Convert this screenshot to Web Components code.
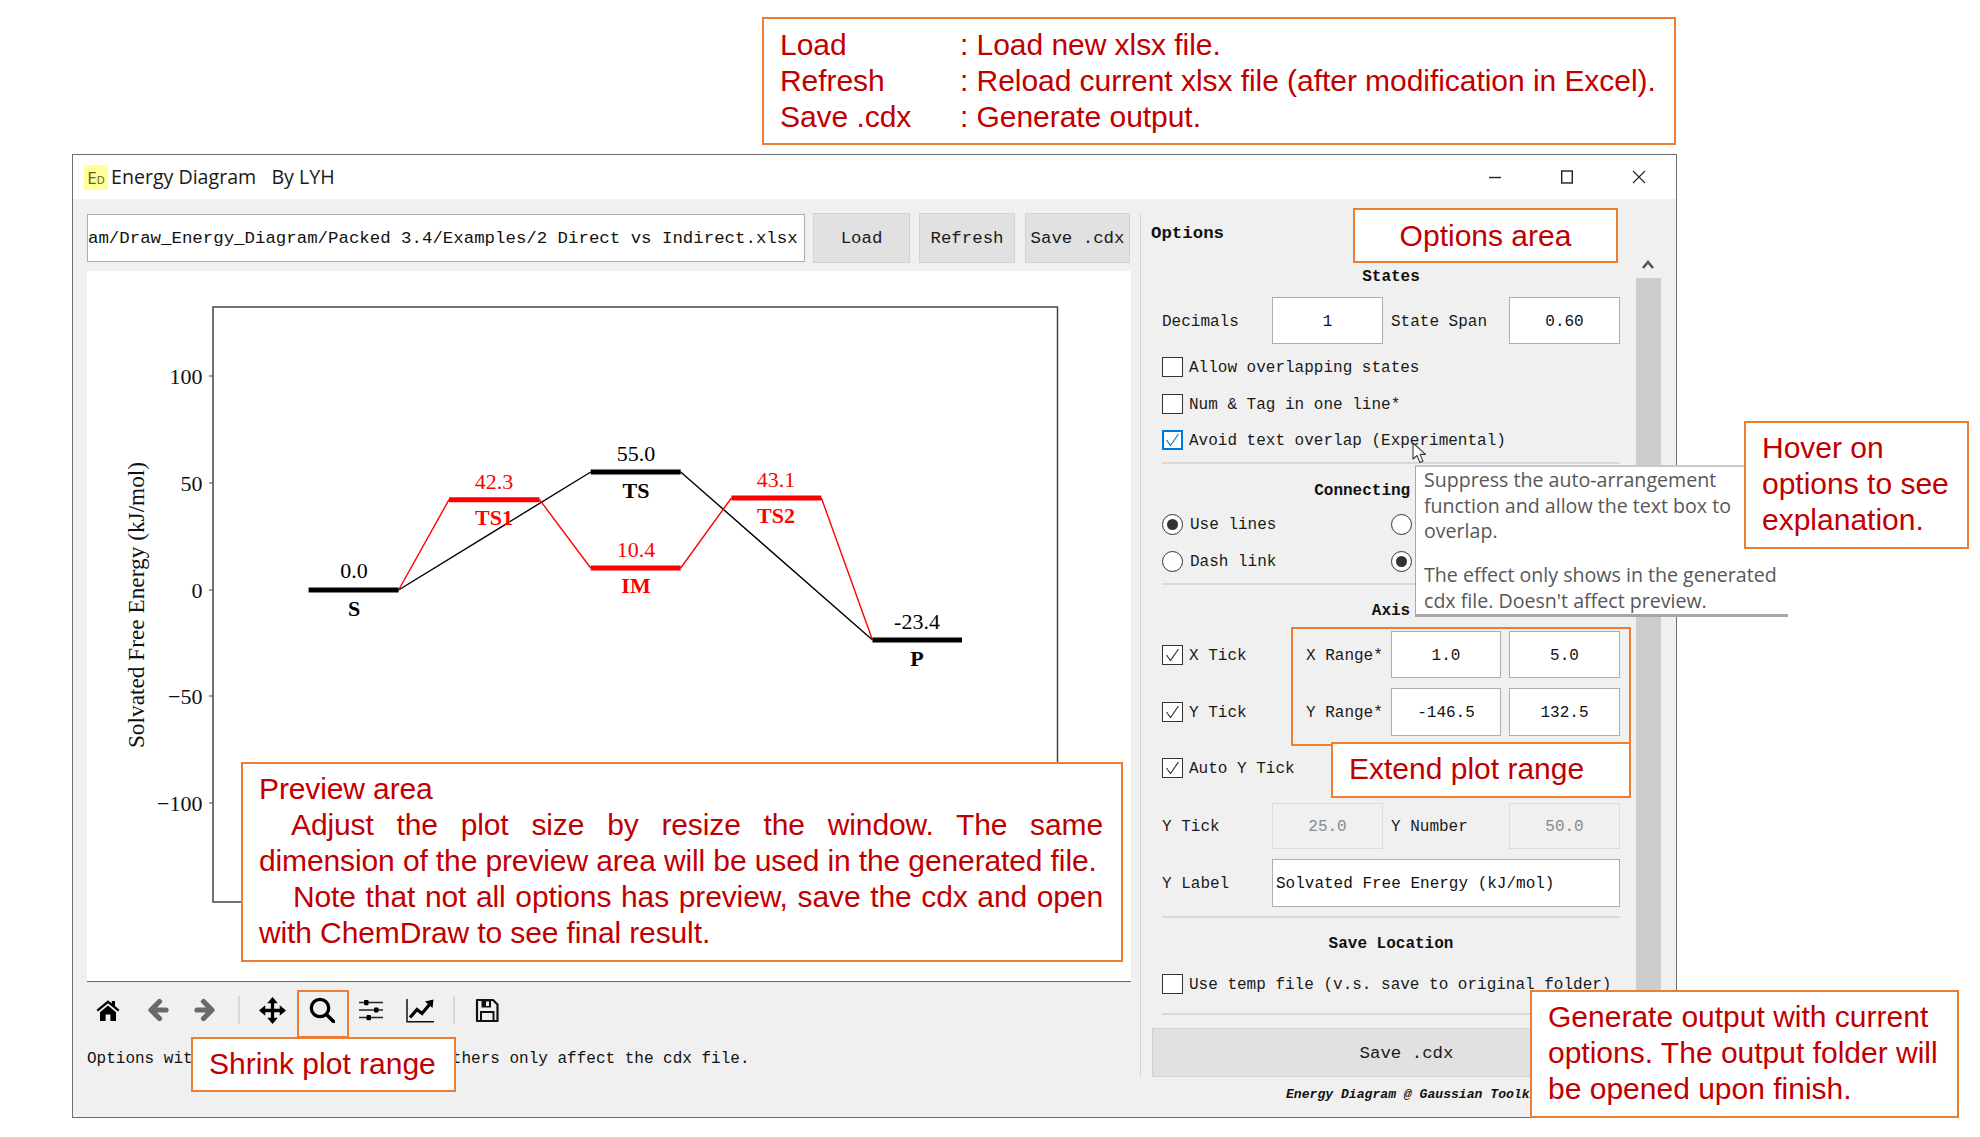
<!DOCTYPE html>
<html lang="en">
<head>
<meta charset="utf-8">
<title>Energy Diagram</title>
<style>
html,body{margin:0;padding:0;background:#fff}
body{position:relative;width:1980px;height:1137px;overflow:hidden;font-family:"Liberation Sans",sans-serif}
</style>
</head>
<body>
<ed-window></ed-window>

<ed-tooltip style="left:1415px;top:465px;width:373px;height:152px"></ed-tooltip>

<ed-note style="left:762px;top:17px;width:914px;height:128px;padding:8px 16px;letter-spacing:-.05px">
  <div style="display:grid;grid-template-columns:180px 1fr;white-space:nowrap">
    <span>Load</span><span>: Load new xlsx file.</span>
    <span>Refresh</span><span>: Reload current xlsx file (after modification in Excel).</span>
    <span>Save .cdx</span><span>: Generate output.</span>
  </div>
</ed-note>
<ed-note style="left:1353px;top:208px;width:265px;height:55px;display:flex;align-items:center;justify-content:center">Options area</ed-note>
<ed-note style="left:1744px;top:421px;width:225px;height:128px;padding:7px 16px">Hover on<br>options to see<br>explanation.</ed-note>
<ed-note style="left:1291px;top:627px;width:340px;height:119px;background:transparent"></ed-note>
<ed-note style="left:1331px;top:742px;width:300px;height:56px;display:flex;align-items:center;padding-left:16px;padding-bottom:2px">Extend plot range</ed-note>
<ed-note style="left:241px;top:762px;width:882px;height:200px;padding:7px 18px 7px 16px;text-align:justify;letter-spacing:-.12px">
  <div>Preview area</div>
  <div style="text-indent:32px">Adjust the plot size by resize the window. The same dimension of the preview area will be used in the generated file.</div>
  <div style="text-indent:34px">Note that not all options has preview, save the cdx and open with ChemDraw to see final result.</div>
</ed-note>
<ed-note style="left:297px;top:990px;width:52px;height:48px;background:transparent"></ed-note>
<ed-note style="left:191px;top:1037px;width:265px;height:55px;display:flex;align-items:center;padding-left:16px;padding-bottom:2px">Shrink plot range</ed-note>
<ed-note style="left:1530px;top:990px;width:429px;height:128px;padding:7px 16px">Generate output with current<br>options. The output folder will<br>be opened upon finish.</ed-note>

<ed-cursor style="left:1412px;top:442px"></ed-cursor>

<script>
function def(name, css, html){
  customElements.define(name, class extends HTMLElement{
    constructor(){
      super();
      const root=this.attachShadow({mode:"open"});
      const t=document.createElement("template");
      t.innerHTML="<style>"+css+"</style>"+html;
      root.appendChild(t.content.cloneNode(true));
    }
  });
}
const MONO='"Liberation Mono","DejaVu Sans Mono",monospace';

def("ed-note",
  ':host{position:absolute;box-sizing:border-box;background:#fff;border:2px solid #ed7d31;color:#c00000;font:30px/36px "Liberation Sans",Arial,sans-serif;pointer-events:none}',
  '<slot></slot>');

def("ed-cursor",
  ':host{position:absolute;display:block;width:16px;height:22px;line-height:0}',
  '<svg width="16" height="22" viewBox="0 0 16 22"><path d="M1 1V17L5 13.5 8 20.5 11 19.2 8 12.4H13.5Z" fill="#fff" stroke="#3a3a3a" stroke-width="1.1" stroke-linejoin="round"/></svg>');

def("ed-tooltip",
  ':host{position:absolute;box-sizing:border-box;background:#fff;border-top:2px solid #c9c9c9;border-left:1px solid #a8a8a8;border-bottom:3px solid #a6a6a6;color:#575757;font:19.6px/25.5px "Open Sans",sans-serif;padding:0 8px;white-space:nowrap}'
  +'p{margin:0}p+p{margin-top:18.5px}',
  '<p>Suppress the auto-arrangement<br>function and allow the text box to<br>overlap.</p><p>The effect only shows in the generated<br>cdx file. Doesn\'t affect preview.</p>');

def("ed-button",
  ':host{display:flex;align-items:center;justify-content:center;box-sizing:border-box;height:50px;padding-top:1px;background:#e1e1e1;border:1.5px solid #d2d2d2;color:#1a1a1a;font:17.4px '+MONO+';white-space:pre}',
  '<slot></slot>');

def("ed-field",
  ':host{display:flex;align-items:center;justify-content:center;box-sizing:border-box;padding-top:2px;background:#fff;border:1.5px solid #adadad;color:#111;font:16px '+MONO+';white-space:pre;overflow:hidden}'
  +':host([disabled]){background:#f0f0f0;border-color:#dcdcdc;color:#8a8a8a}'
  +':host([left]){justify-content:flex-start;padding-left:3px}',
  '<slot></slot>');

def("ed-check",
  ':host{display:flex;align-items:center;gap:6px;font:16px '+MONO+';color:#1a1a1a;white-space:pre}'
  +'.b{box-sizing:border-box;width:21px;height:20px;flex:none;background:#fff;border:1.5px solid #333;display:flex;align-items:center;justify-content:center}'
  +'.l{padding-top:2px}'
  +'svg{display:none}:host([checked]) svg{display:block}'
  +':host([accent]) .b{border-color:#0078d7;border-width:2px}:host([accent]) path{stroke:#0078d7}',
  '<span class="b"><svg width="15" height="14" viewBox="0 0 15 14"><path d="M1.5 7 L5.5 12.5 L13.5 1" fill="none" stroke="#333" stroke-width="1.2"/></svg></span><span class="l"><slot></slot></span>');

def("ed-radio",
  ':host{display:flex;align-items:center;gap:7px;font:16px '+MONO+';color:#1a1a1a;white-space:pre}'
  +'.r{box-sizing:border-box;width:21px;height:21px;flex:none;border-radius:50%;background:#fff;border:1.5px solid #333;display:flex;align-items:center;justify-content:center}'
  +'.l{padding-top:2px}'
  +'i{display:none;width:11px;height:11px;border-radius:50%;background:#333}:host([checked]) i{display:block}',
  '<span class="r"><i></i></span><span class="l"><slot></slot></span>');

def("ed-divider",
  ':host{display:block;height:2px;background:#d8d8d8}','');

def("ed-titlebar",
  ':host{display:flex;align-items:center;height:44px;background:#fff;box-sizing:border-box;padding-left:11px}'
  +'.ic{display:flex;align-items:baseline;justify-content:center;width:24px;height:25px;background:#ffff99;color:#66661a;font:17px/25px "Noto Sans",sans-serif;margin-right:3px;overflow:hidden}'
  +'.ic small{font-size:11px;line-height:25px}'
  +'.t{font:19.6px "Open Sans",sans-serif;color:#1a1a1a;white-space:pre;padding-bottom:2px}'
  +'.c{margin-left:auto;display:flex;padding-right:1px}'
  +'.c span{width:71.5px;height:44px;display:flex;align-items:center;justify-content:center;box-sizing:border-box}'
  +'.c span.a{padding-right:3px}.c span.b{padding-right:1.5px}',
  '<span class="ic">E<small>D</small></span><span class="t">Energy Diagram   By LYH</span>'
  +'<div class="c">'
  +'<span class="a"><svg width="14" height="14" viewBox="0 0 14 14"><path d="M1 7.500H13" stroke="#222" stroke-width="1.400"/></svg></span>'
  +'<span class="b"><svg width="14" height="14" viewBox="0 0 14 14"><rect x="1.700" y="1" width="10.600" height="12" fill="none" stroke="#222" stroke-width="1.400"/></svg></span>'
  +'<span><svg width="14" height="14" viewBox="0 0 14 14"><path d="M1 1L13 13M13 1L1 13" stroke="#222" stroke-width="1.100"/></svg></span>'
  +'</div>');

def("ed-plot",
  ':host{display:block;height:710px;background:#fff;border-bottom:1.5px solid #666;line-height:0}'
  +'svg{display:block}text{font-family:"Liberation Serif","Times New Roman",serif;font-size:22px}'
  +'.b{font-weight:bold;font-size:22px}.yl{font-size:23.300px}',
  '<svg width="1044" height="710" viewBox="87 271 1044 710">'
  +'<rect x="213" y="307" width="844.500" height="595" fill="none" stroke="#444" stroke-width="1.500"/>'
  +'<g stroke="#444" stroke-width="1.200"><path d="M209 376H213M209 483H213M209 590H213M209 696H213M209 803H213"/></g>'
  +'<g text-anchor="end" fill="#111"><text x="202.500" y="384">100</text><text x="202.500" y="491">50</text><text x="202.500" y="597.500">0</text><text x="202.500" y="704">−50</text><text x="202.500" y="811">−100</text></g>'
  +'<text class="yl" transform="translate(144 605) rotate(-90)" text-anchor="middle" fill="#111">Solvated Free Energy (kJ/mol)</text>'
  +'<g fill="none" stroke-width="1.400">'
  +'<path d="M398.600 590L590.700 472M680.700 472L872.500 640" stroke="#000"/>'
  +'<path d="M398.600 590L449 499.700M539.600 499.700L590.700 568M680.700 568L731.400 498M821.400 498L872.500 640" stroke="#f00"/>'
  +'</g>'
  +'<g stroke-width="5">'
  +'<path d="M308.600 590H398.600M590.700 472H680.700M872.500 640H962" stroke="#000"/>'
  +'<path d="M449 499.700H539.600M590.700 568H680.700M731.400 498H821.400" stroke="#f00"/>'
  +'</g>'
  +'<g text-anchor="middle" fill="#000">'
  +'<text x="354" y="578">0.0</text><text x="354" y="616" class="b">S</text>'
  +'<text x="636" y="461">55.0</text><text x="636" y="498" class="b">TS</text>'
  +'<text x="917" y="629">-23.4</text><text x="917" y="666" class="b">P</text>'
  +'</g>'
  +'<g text-anchor="middle" fill="#f00">'
  +'<text x="494" y="489">42.3</text><text x="494" y="525" class="b">TS1</text>'
  +'<text x="636" y="557">10.4</text><text x="636" y="593" class="b">IM</text>'
  +'<text x="776" y="487">43.1</text><text x="776" y="523" class="b">TS2</text>'
  +'</g>'
  +'</svg>');

def("ed-toolbar",
  ':host{display:flex;align-items:center;height:55px;padding-left:9px;padding-top:1px;box-sizing:border-box}'
  +'svg{display:block;flex:none}.sep{width:2px;height:28px;background:#d8d8d8;flex:none}',
  /* home */
  '<svg width="24" height="24" viewBox="0 0 24 24"><path d="M12 2.200L.6 11.800l1.400 1.700L12 5.200l10 8.300 1.400-1.700-4.400-3.700V3h-3.200v2.400z" fill="#000"/><path d="M4 14.200L12 7.400l8 6.800V23h-5.600v-6.400H9.600V23H4z" fill="#000"/></svg>'
  /* back */
  +'<svg style="margin-left:27px" width="22" height="24" viewBox="0 0 22 24"><path d="M19 12H5M12.500 3.500L4 12l8.500 8.500" fill="none" stroke="#6a6a6a" stroke-width="5.200" stroke-linejoin="round" stroke-linecap="round"/></svg>'
  /* forward */
  +'<svg style="margin-left:25px" width="22" height="24" viewBox="0 0 22 24"><path d="M3 12H17M9.500 3.500L18 12l-8.500 8.500" fill="none" stroke="#6a6a6a" stroke-width="5.200" stroke-linejoin="round" stroke-linecap="round"/></svg>'
  +'<span class="sep" style="margin-left:22px"></span>'
  /* move */
  +'<svg style="margin-left:19px" width="27" height="27" viewBox="0 0 28 28"><path d="M14 4V24M4 14H24" stroke="#000" stroke-width="3.400"/><path d="M14 0l5.500 6.500h-11zM14 28l5.500-6.500h-11zM0 14l6.500-5.500v11zM28 14l-6.500-5.500v11z" fill="#000"/></svg>'
  /* zoom */
  +'<svg style="margin-left:23px" width="26" height="26" viewBox="0 0 26 26"><circle cx="11" cy="11" r="8.700" fill="none" stroke="#000" stroke-width="3.300"/><path d="M17.500 17.500L24.500 24.500" stroke="#000" stroke-width="3.600" stroke-linecap="round"/></svg>'
  /* configure */
  +'<svg style="margin-left:24px" width="24" height="24" viewBox="0 0 24 24"><path d="M0 4.500H24M0 12H24M0 19.500H24" stroke="#222" stroke-width="1.600"/><rect x="5" y="2" width="4.500" height="5.200" rx="1" fill="#000"/><rect x="15" y="9.400" width="4.500" height="5.200" rx="1" fill="#000"/><rect x="7.500" y="17" width="4.500" height="5.200" rx="1" fill="#000"/></svg>'
  /* chart */
  +'<svg style="margin-left:23px" width="28" height="25" viewBox="0 0 28 25"><path d="M1 1V23.700H28" fill="none" stroke="#111" stroke-width="1.500"/><path d="M4 19.500L11 11.500 16 15.500 23.500 6.500" fill="none" stroke="#000" stroke-width="3.200"/><path d="M19 3.500L27.500 1.500 26.500 10z" fill="#000"/></svg>'
  +'<span class="sep" style="margin-left:19px"></span>'
  /* save */
  +'<svg style="margin-left:20px" width="24" height="25" viewBox="0 0 24 25"><path d="M2 2H18L22.500 6.500V23H2z" fill="none" stroke="#111" stroke-width="2.200" stroke-linejoin="round"/><path d="M6.500 2H16V9.500H6.500z" fill="#111"/><rect x="11" y="3.500" width="3" height="4.500" fill="#f0f0f0"/><rect x="6" y="14" width="12.500" height="9" fill="none" stroke="#111" stroke-width="2"/></svg>');

def("ed-options",
  ':host{display:block;font:16px '+MONO+';color:#1a1a1a;white-space:pre}'
  +'.head{height:40px;display:flex;align-items:center;padding-left:10px;font:bold 17.400px '+MONO+';color:#111}'
  +'.main{display:flex}'
  +'.form{box-sizing:border-box;width:495px;padding:0 16px 0 21px;flex:none;height:762px}'
  +'.t{font-weight:bold;text-align:center;line-height:20px;color:#111}'
  +'.r4{display:grid;grid-template-columns:110px 111px 126px 111px;align-items:center}'
  +'.r4>span{padding-top:2px}.r4>span:nth-child(3){padding-left:8px}'
  +'.cr{height:36.500px;display:flex;align-items:center}'
  +'.rr{height:37px;display:grid;grid-template-columns:229px 1fr;align-items:center}'
  +'.ax{display:grid;grid-template-columns:144px 85px 110px 119px;grid-template-rows:47px 48px;row-gap:10px;align-items:center}'
  +'.ax>span{padding-top:2px}'
  +'.ax ed-field{align-self:stretch}.ax .p{display:flex;gap:8px;grid-column:3 / 5;align-self:stretch}.ax .p ed-field{flex:none;width:110px}.ax .p ed-field+ed-field{width:111px}'
  +'.sb{width:25px;flex:none;display:flex;flex-direction:column;align-items:center;height:762px;padding-top:6px;box-sizing:border-box}'
  +'.sb svg{display:block;margin-bottom:9px;margin-right:2px;flex:none}.sb i{display:block;width:25px;flex:1;background:#cdcdcd}',
  '<div class="head">Options</div>'
  +'<div class="main"><div class="form">'
  +'<div class="t" style="padding-top:14px;height:30px">States</div>'
  +'<div class="r4" style="height:47px"><span>Decimals</span><ed-field style="height:47px">1</ed-field><span>State Span</span><ed-field style="height:47px">0.60</ed-field></div>'
  +'<div style="height:4.750px"></div>'
  +'<div class="cr"><ed-check>Allow overlapping states</ed-check></div>'
  +'<div class="cr"><ed-check>Num &amp; Tag in one line*</ed-check></div>'
  +'<div class="cr"><ed-check checked accent>Avoid text overlap (Experimental)</ed-check></div>'
  +'<ed-divider style="margin-top:3.750px"></ed-divider>'
  +'<div class="t" style="padding-top:17px;height:24.500px">Connecting Lines</div>'
  +'<div class="rr"><ed-radio checked>Use lines</ed-radio><ed-radio></ed-radio></div>'
  +'<div class="rr"><ed-radio>Dash link</ed-radio><ed-radio checked></ed-radio></div>'
  +'<ed-divider style="margin-top:3.500px"></ed-divider>'
  +'<div class="t" style="padding-top:16px;height:30px">Axis</div>'
  +'<div class="ax">'
  +'<ed-check checked>X Tick</ed-check><span>X Range*</span><div class="p"><ed-field>1.0</ed-field><ed-field>5.0</ed-field></div>'
  +'<ed-check checked>Y Tick</ed-check><span>Y Range*</span><div class="p"><ed-field>-146.5</ed-field><ed-field>132.5</ed-field></div>'
  +'</div>'
  +'<div style="height:64px;display:flex;align-items:center"><ed-check checked>Auto Y Tick</ed-check></div>'
  +'<div class="r4" style="margin-top:3px;height:46px"><span>Y Tick</span><ed-field disabled style="height:46px">25.0</ed-field><span>Y Number</span><ed-field disabled style="height:46px">50.0</ed-field></div>'
  +'<div class="r4" style="grid-template-columns:110px 1fr;margin-top:10px"><span>Y Label</span><ed-field left style="height:48px">Solvated Free Energy (kJ/mol)</ed-field></div>'
  +'<ed-divider style="margin-top:9px"></ed-divider>'
  +'<div class="t" style="padding-top:16px;height:19px">Save Location</div>'
  +'<div class="cr" style="margin-top:13px;height:36px"><ed-check>Use temp file (v.s. save to original folder)</ed-check></div>'
  +'<ed-divider style="margin-top:11px"></ed-divider>'
  +'</div>'
  +'<div class="sb"><svg width="14" height="10" viewBox="0 0 14 10"><path d="M2 9L7 3l5 6" fill="none" stroke="#555" stroke-width="2.600"/></svg><i></i></div>'
  +'</div>');

def("ed-window",
  ':host{position:absolute;left:72px;top:154px;box-sizing:border-box;width:1605px;height:964px;display:flex;flex-direction:column;background:#f0f0f0;border:1px solid #6e6e6e}'
  +'.body{display:flex;flex:1;min-height:0}'
  +'.left{box-sizing:border-box;width:1058px;padding:14px 0 0 14px;flex:none}'
  +'.top{display:flex;align-items:center;height:50px;gap:9px;margin-bottom:8px}'
  +'.path{box-sizing:border-box;width:718px;height:48px;margin-right:-1px;padding-top:1px;background:#fff;border:1.5px solid #adadad;color:#111;font:17.400px '+MONO+';display:flex;align-items:center;white-space:pre;overflow:hidden}'
  +'.status{font:16px/44px '+MONO+';color:#111;white-space:pre}'
  +'.right{margin-left:9px;flex:1;display:flex;flex-direction:column;padding-top:14px;min-width:0}'
  +'.scroll{border-left:1px solid #d4d4d4;height:864px;box-sizing:border-box}'
  +'.save{margin-top:13px;margin-left:11px;width:509px;height:49px}'
  +'.foot{font:italic bold 13.100px/36px '+MONO+';color:#111;white-space:pre;padding-left:146px;margin-top:0}',
  '<ed-titlebar></ed-titlebar>'
  +'<div class="body"><div class="left">'
  +'<div class="top"><div class="path">am/Draw_Energy_Diagram/Packed 3.4/Examples/2 Direct vs Indirect.xlsx</div>'
  +'<ed-button style="width:97px">Load</ed-button><ed-button style="width:96px">Refresh</ed-button><ed-button style="width:105px;margin-left:1px">Save .cdx</ed-button></div>'
  +'<ed-plot></ed-plot><ed-toolbar></ed-toolbar>'
  +'<div class="status">Options with * are shown in preview, others only affect the cdx file.</div>'
  +'</div>'
  +'<div class="right"><div class="scroll"><ed-options></ed-options><ed-button class="save">Save .cdx</ed-button></div>'
  +'<div class="foot">Energy Diagram @ Gaussian Toolkit</div></div>'
  +'</div>');
</script>
</body>
</html>
